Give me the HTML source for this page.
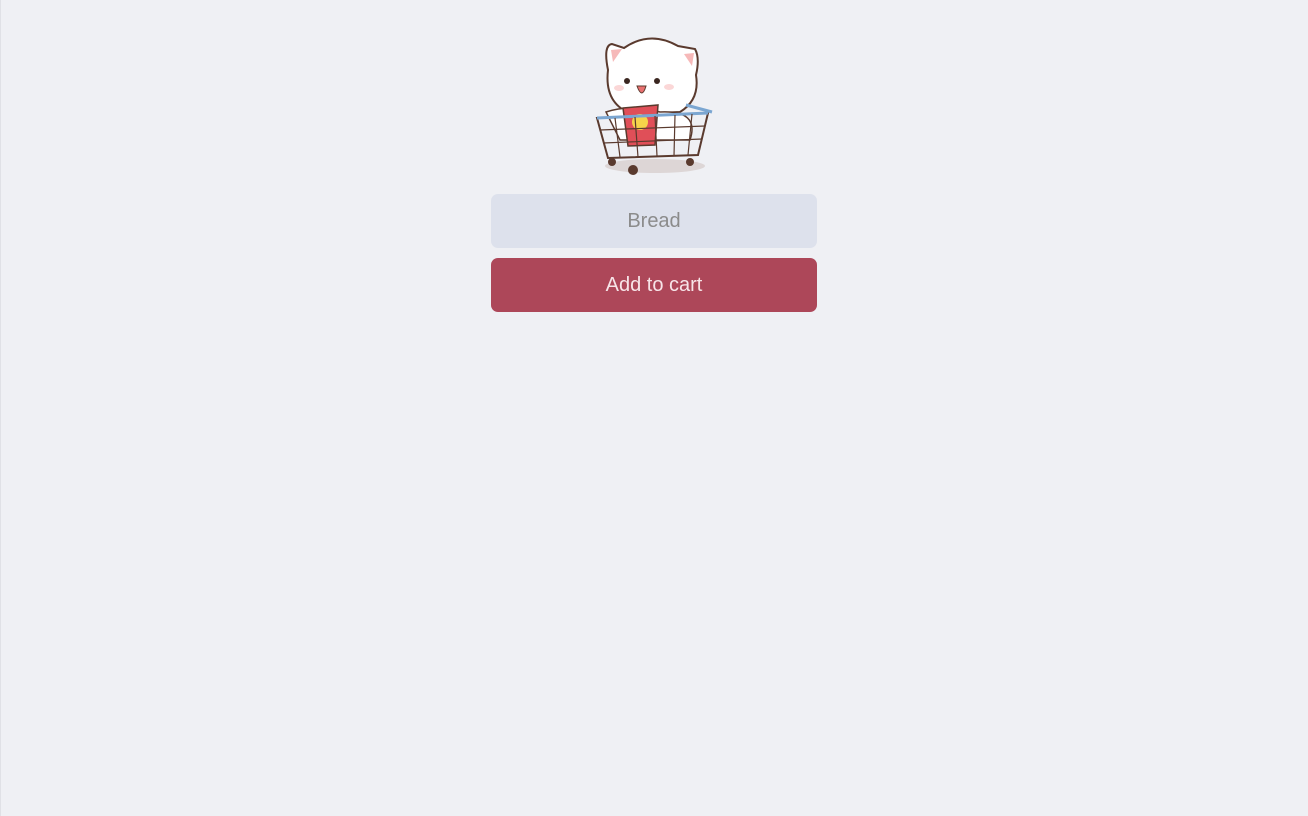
<!DOCTYPE html>
<html><head><meta charset="utf-8"><style>
html,body{margin:0;padding:0}
body{width:1308px;height:816px;background:#eff0f4;position:relative;overflow:hidden;font-family:"Liberation Sans",sans-serif}
.edge{position:absolute;left:0;top:0;width:1px;height:816px;background:#e0e1e6}
.cat{position:absolute;left:590px;top:34px}
.inp{position:absolute;left:491px;top:194px;width:326px;height:54px;background:#dde1ec;border-radius:7px;color:#8b8b8b;font-size:20px;line-height:54px;text-align:center}
.btn{position:absolute;left:491px;top:258px;width:326px;height:54px;background:#ad4759;border-radius:7px;color:#f7e4e8;font-size:20px;line-height:54px;text-align:center}
</style></head><body>
<div class="edge"></div>
<svg class="cat" width="130" height="145" viewBox="590 34 130 145">
<ellipse cx="655" cy="166" rx="50" ry="7" fill="#ddd6d6"/>
<path d="M608 70 Q603 45 612 44 L624 48 Q650 30 678 46 L695 49 Q700 58 696 75 Q700 100 680 112 L632 114 Q604 104 608 70Z" fill="#fff" stroke="#5a3a2e" stroke-width="2"/>
<path d="M611 50 L622 49 L613 62Z" fill="#f6b9b9"/>
<path d="M694 53 L684 54 L692 66Z" fill="#f6b9b9"/>
<circle cx="627" cy="81" r="3" fill="#3a2620"/><circle cx="657" cy="81" r="3" fill="#3a2620"/>
<ellipse cx="619" cy="88" rx="5" ry="3" fill="#fbd7d7"/><ellipse cx="669" cy="87" rx="5" ry="3" fill="#fbd7d7"/>
<path d="M637 86 Q642 100 646 86Z" fill="#e97070" stroke="#5a3a2e" stroke-width="1"/>
<path d="M606 112 Q630 104 660 112 Q700 110 690 140 L620 140Z" fill="#fff" stroke="#5a3a2e" stroke-width="1.5"/>
<path d="M623 108 L658 105 L655 145 L628 146Z" fill="#e04f58" stroke="#5a3a2e" stroke-width="1.5"/>
<circle cx="640" cy="122" r="8" fill="#f6d44a"/>
<path d="M597 118 L708 113 L698 155 L608 158Z" fill="none" stroke="#5a3a2e" stroke-width="2"/>
<path d="M597 118 L708 113 M686 105 L712 112" stroke="#7ba6d1" stroke-width="3" fill="none"/>
<g stroke="#5a3a2e" stroke-width="1.2"><path d="M600 130 L705 126 M603 143 L702 139"/><path d="M615 118 L620 157 M635 117 L638 157 M655 116 L657 156 M675 115 L674 156 M692 114 L688 155"/></g>
<circle cx="612" cy="162" r="4" fill="#5a3a2e"/><circle cx="633" cy="170" r="5" fill="#5a3a2e"/><circle cx="690" cy="162" r="4" fill="#5a3a2e"/>
</svg>
<div class="inp">Bread</div>
<div class="btn">Add to cart</div>
</body></html>
